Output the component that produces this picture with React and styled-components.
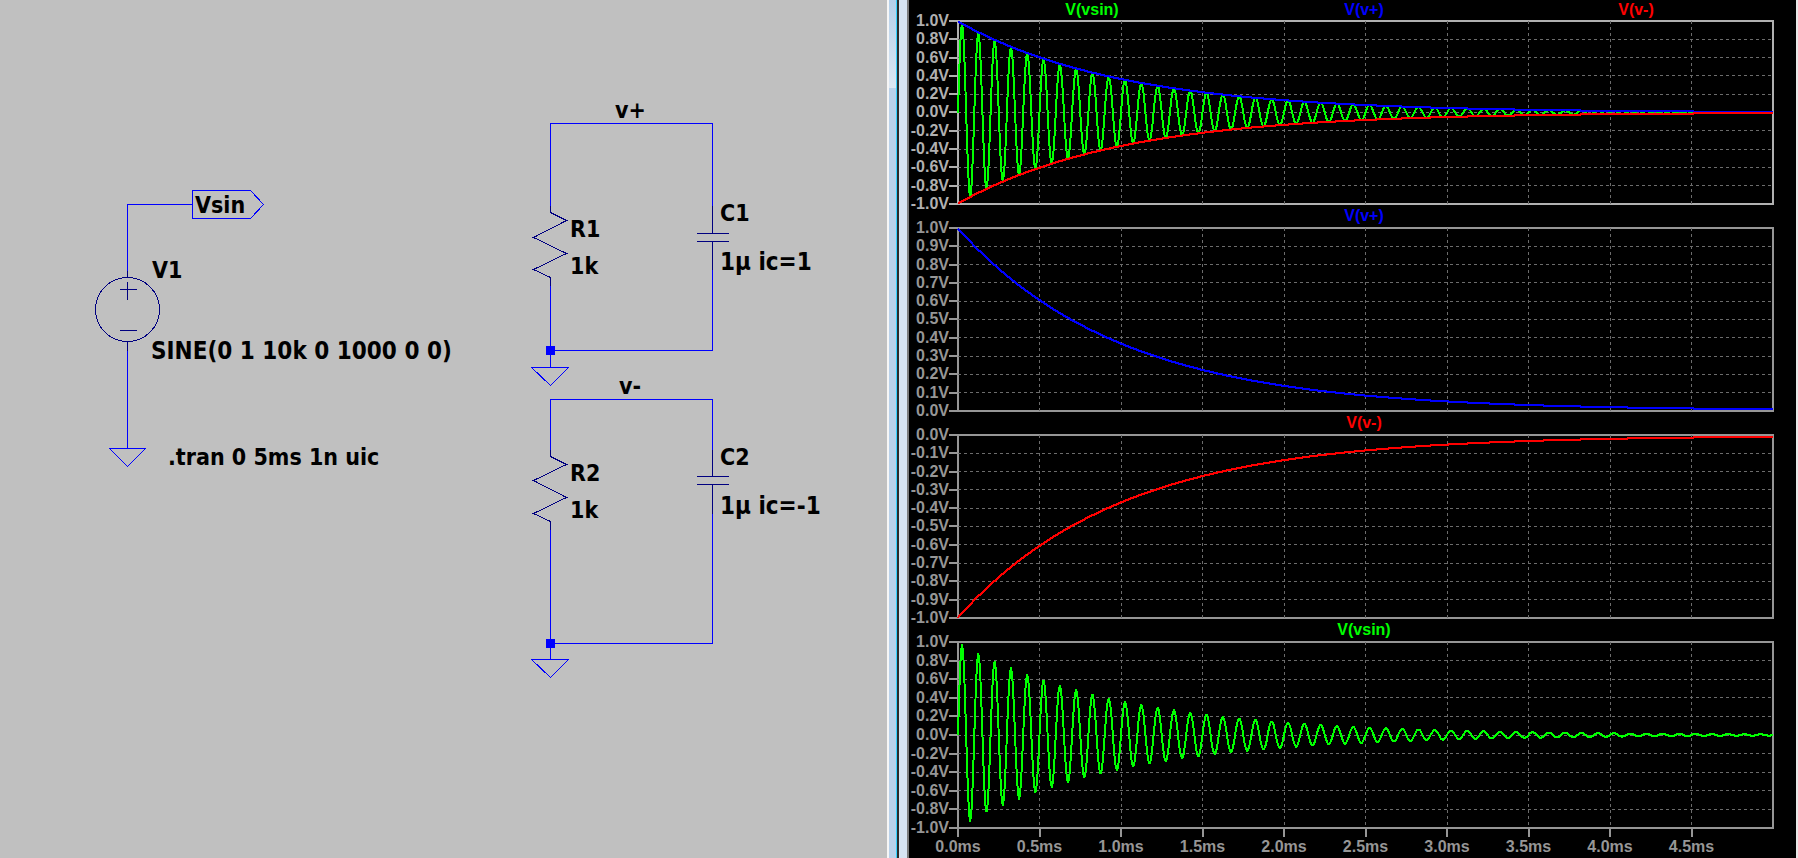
import React from "react";
import styled, { createGlobalStyle } from "styled-components";

const GlobalStyle = createGlobalStyle`
  body {
    margin: 0;
    background: #c0c0c0;
  }
`;

const WIRE = "#0000ff";
const BODY = "#000080";
const GREEN = "#00ff00";
const BLUE = "#0000ff";
const RED = "#ff0000";

const Workspace = styled.main`
  display: flex;
  min-height: 100vh;
`;

const SchematicPane = styled.section`
  flex: 887 1 0;
  min-width: 0;
  overflow: hidden;
  background: #c0c0c0;
`;

const Drawing = styled.svg`
  display: block;
  shape-rendering: crispEdges;
`;

const Wire = styled.path`
  fill: none;
  stroke: ${(p) => (p.$part ? BODY : WIRE)};
  stroke-width: 1px;
`;

const Junction = styled.rect`
  fill: ${WIRE};
`;

const Label = styled.text`
  font-family: "DejaVu Sans Condensed", "DejaVu Sans", sans-serif;
  font-weight: 700;
  font-size: ${(p) => (p.$value ? 24 : 23)}px;
  fill: #000;
`;

const Splitter = styled.div`
  flex: none;
  display: flex;
`;

const Strip = styled.span`
  width: ${(p) => p.$w}px;
  background: ${(p) => p.$fill};
`;

const WavePane = styled.section`
  flex: 887 1 0;
  min-width: 0;
  display: flex;
  flex-direction: column;
  background: #000;
  border-right: 2px solid #e8e8e8;
  font-family: "Liberation Sans", Arial, sans-serif;
  font-weight: 700;
  font-size: 16px;
`;

const TraceTitles = styled.header`
  display: flex;
  height: ${(p) => (p.$first ? 20 : 22)}px;
  line-height: ${(p) => (p.$first ? 20 : 22)}px;
  margin: 0 24px 0 47px;
`;

const TraceTitle = styled.h2`
  flex: 1;
  margin: 0;
  font: inherit;
  text-align: center;
  color: ${(p) => p.$color};
`;

const PlotRow = styled.div`
  display: flex;
  flex: 1 1 ${(p) => p.$height}px;
  margin-right: 22px;
  color: ${(p) => (p.$active ? "#b0b0b0" : "#969696")};
`;

const YAxis = styled.div`
  width: 48px;
  flex: none;
  display: flex;
  flex-direction: column;
  justify-content: space-between;
`;

const YTick = styled.div`
  height: 2px;
  display: flex;
  align-items: center;
  justify-content: flex-end;
  line-height: 18px;
  white-space: nowrap;

  &::after {
    content: "";
    flex: none;
    width: 8px;
    height: 2px;
    background: currentColor;
  }
`;

const Frame = styled.div`
  flex: 1;
  min-width: 0;
  display: flex;
  border: 2px solid currentColor;
`;

const Canvas = styled.svg`
  flex: 1;
  min-width: 0;
  min-height: 0;
  margin: -1px;
  overflow: visible;
  shape-rendering: crispEdges;
`;

const GridLine = styled.line`
  stroke: #6c6c6c;
  stroke-width: 1px;
  stroke-dasharray: 3 3;
`;

const Curve = styled.path`
  fill: none;
  stroke: ${(p) => p.$color};
  stroke-width: 2px;
  stroke-linejoin: round;
  vector-effect: non-scaling-stroke;
`;

const XAxis = styled.div`
  flex: none;
  height: 29px;
  margin: 0 22px 0 48px;
  display: flex;
  justify-content: space-between;
  color: #969696;
`;

const XTick = styled.div`
  width: 2px;
  display: flex;
  flex-direction: column;
  align-items: center;
  white-space: nowrap;
  line-height: 20px;

  &::before {
    content: "";
    flex: none;
    width: 2px;
    height: 8px;
    background: ${(p) => (p.$blank ? "transparent" : "currentColor")};
  }
`;

const SPAN_MS = 5;
const CURVE_WIDTH = 815;

const signals = {
  "V(vsin)": {
    color: GREEN,
    at: (ms) => Math.exp(-ms) * Math.sin(2 * Math.PI * 10 * ms),
  },
  "V(v+)": { color: BLUE, at: (ms) => Math.exp(-ms) },
  "V(v-)": { color: RED, at: (ms) => -Math.exp(-ms) },
};

function tracePath(at, max, min, height) {
  const points = [];
  for (let x = 0; x <= CURVE_WIDTH; x += 1) {
    const value = at((x / CURVE_WIDTH) * SPAN_MS);
    const y = Math.floor(1 + ((max - value) / (max - min)) * (height - 1));
    points.push(`${x} ${y}`);
  }
  return `M${points.join("L")}`;
}

const inner = [1, 2, 3, 4, 5, 6, 7, 8, 9];

const plots = [
  { names: ["V(vsin)", "V(v+)", "V(v-)"], max: 1, min: -1, height: 185 },
  { names: ["V(v+)"], max: 1, min: 0, height: 185 },
  { names: ["V(v-)"], max: 0, min: -1, height: 185 },
  { names: ["V(vsin)"], max: 1, min: -1, height: 188 },
];

function volts(max, min, i) {
  const v = (max * 10 - (i * (max - min) * 10) / 10) / 10;
  return `${(Math.abs(v) < 0.01 ? 0 : v).toFixed(1)}V`;
}

function Plot({ names, max, min, height, first }) {
  const curveHeight = height - 2;
  return (
    <>
      <TraceTitles $first={first}>
        {names.map((name) => (
          <TraceTitle key={name} $color={signals[name].color}>
            {name}
          </TraceTitle>
        ))}
      </TraceTitles>
      <PlotRow $height={height} $active={first}>
        <YAxis>
          {[0, ...inner, 10].map((i) => (
            <YTick key={i}>{volts(max, min, i)}</YTick>
          ))}
        </YAxis>
        <Frame>
          <Canvas role="img" aria-label={names.join(", ")}>
            {inner.map((i) => (
              <React.Fragment key={i}>
                <GridLine x1="0" x2="100%" y1={`${i * 10}%`} y2={`${i * 10}%`} />
                <GridLine y1="0" y2="100%" x1={`${i * 10}%`} x2={`${i * 10}%`} />
              </React.Fragment>
            ))}
            <svg
              width="100%"
              height="100%"
              viewBox={`0 0 ${CURVE_WIDTH} ${curveHeight}`}
              preserveAspectRatio="none"
              overflow="visible"
            >
              {names.map((name) => (
                <Curve
                  key={name}
                  $color={signals[name].color}
                  d={tracePath(signals[name].at, max, min, curveHeight)}
                />
              ))}
            </svg>
          </Canvas>
        </Frame>
      </PlotRow>
    </>
  );
}

function Schematic() {
  return (
    <Drawing width="887" height="720" role="img" aria-label="Circuit schematic">
      <g transform="translate(0.5 0.5)">
        {/* sine source V1 */}
        <Wire d="M192 204H127V270M127 350V448M109 448H145L127 466Z" />
        <Wire d="M192 190H250L263 204L250 218H192Z" />
        <Wire $part d="M127 270V277M127 341V350M119 289H136M127 281V299M119 330H136" />
        <Wire $part d="M95 309a32 32 0 1 0 64 0a32 32 0 1 0 -64 0" />

        {/* v+ loop: R1 and C1 */}
        <Wire d="M550 205V123H712V205M712 269V350H550M550 285V367M531 367H568L550 385Z" />
        <Wire $part d="M550 205V212L566 220L533 237L566 253L533 269L550 277V285" />
        <Wire $part d="M712 205V233M696 233H728M696 241H728M712 241V269" />

        {/* v- loop: R2 and C2 */}
        <Wire d="M550 449V399H712V449M712 513V643H550M550 529V659M531 659H568L550 677Z" />
        <Wire $part d="M550 449V456L566 464L533 480L566 497L533 513L550 521V529" />
        <Wire $part d="M712 449V476M696 476H728M696 484H728M712 484V513" />
      </g>
      <Junction x="546" y="346" width="9" height="9" />
      <Junction x="546" y="639" width="9" height="9" />

      <Label x="195" y="213">Vsin</Label>
      <Label x="152" y="278">V1</Label>
      <Label $value x="151" y="359">SINE(0 1 10k 0 1000 0 0)</Label>
      <Label x="168" y="465">.tran 0 5ms 1n uic</Label>

      <Label x="615" y="118">v+</Label>
      <Label x="570" y="237">R1</Label>
      <Label x="570" y="274">1k</Label>
      <Label x="720" y="221">C1</Label>
      <Label $value x="720" y="270">1µ ic=1</Label>

      <Label x="619" y="394">v-</Label>
      <Label x="570" y="481">R2</Label>
      <Label x="570" y="518">1k</Label>
      <Label x="720" y="465">C2</Label>
      <Label $value x="720" y="514">1µ ic=-1</Label>
    </Drawing>
  );
}

export default function App() {
  return (
    <>
      <GlobalStyle />
      <Workspace>
        <SchematicPane>
          <Schematic />
        </SchematicPane>
        <Splitter>
          <Strip $w={2} $fill="#f6f6f6" />
          <Strip
            $w={7}
            $fill="linear-gradient(#b4cfe9 0, #dce7f3 88px, #b9d1ea 88px)"
          />
          <Strip $w={1} $fill="#33d2ff" />
          <Strip $w={2} $fill="#2b2b2b" />
          <Strip $w={8} $fill="#d7e4f2" />
          <Strip $w={2} $fill="#7c7c7c" />
        </Splitter>
        <WavePane>
          {plots.map((plot, i) => (
            <Plot key={i} {...plot} first={i === 0} />
          ))}
          <XAxis>
            {[0, ...inner].map((i) => (
              <XTick key={i}>{`${(i / 2).toFixed(1)}ms`}</XTick>
            ))}
            <XTick $blank />
          </XAxis>
        </WavePane>
      </Workspace>
    </>
  );
}
